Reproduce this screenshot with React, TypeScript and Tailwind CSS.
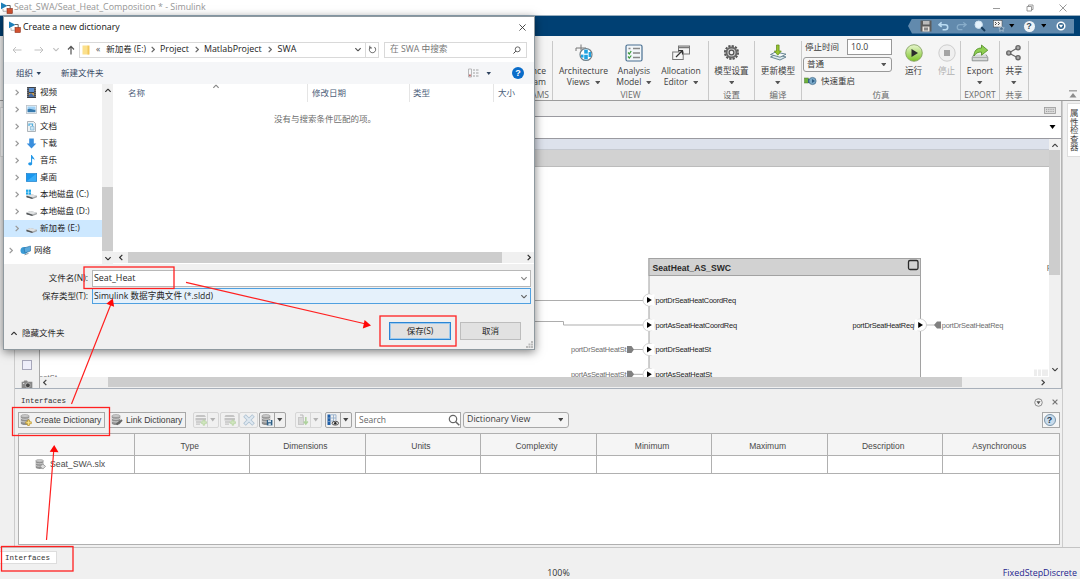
import type { ReactNode } from "react";

import clsx from "clsx";

type IconProps = {
  className?: string;
};

const UI_FONT = "font-['Open_Sans','Noto_Sans_CJK_SC',sans-serif]";

const COLUMNS = [
  "",
  "Type",
  "Dimensions",
  "Units",
  "Complexity",
  "Minimum",
  "Maximum",
  "Description",
  "Asynchronous",
];

const TREE = [
  { name: "视频", icon: <VideoIcon /> },
  { name: "图片", icon: <PictureIcon /> },
  { name: "文档", icon: <DocumentIcon /> },
  { name: "下载", icon: <DownloadIcon /> },
  { name: "音乐", icon: <MusicIcon /> },
  { name: "桌面", icon: <DesktopIcon /> },
  { name: "本地磁盘 (C:)", icon: <DiskIcon system /> },
  { name: "本地磁盘 (D:)", icon: <DiskIcon /> },
  { name: "新加卷 (E:)", icon: <DiskIcon />, selected: true },
];

/* ---------- icons ---------- */

function Caret({ className }: IconProps) {
  return (
    <svg viewBox="0 0 6 4" className={clsx("h-[3.5px] w-[5.5px] shrink-0", className)}>
      <path d="M0 0h6L3 4z" fill="currentColor" />
    </svg>
  );
}

function Chevron({ className }: IconProps) {
  return (
    <svg viewBox="0 0 6 10" className={clsx("h-[7px] w-[4px] shrink-0", className)}>
      <path d="M1 1l4 4-4 4" fill="none" stroke="currentColor" strokeWidth="1.8" />
    </svg>
  );
}

function SimulinkIcon({ className }: IconProps) {
  return (
    <svg viewBox="0 0 12 12" className={clsx("h-3 w-3 shrink-0", className)}>
      <path d="M0 .5l6.500 3.300L0 7.200z" fill="#1e7fb8" />
      <path d="M6 3.500h3.200V7" fill="none" stroke="#555" strokeWidth=".9" />
      <rect x="6" y="6.500" width="5.300" height="5" fill="#d2512f" stroke="#8e2d18" strokeWidth=".6" />
      <path d="M2 7v2.300h4" fill="none" stroke="#999" strokeWidth=".7" />
    </svg>
  );
}

function VideoIcon() {
  return (
    <svg viewBox="0 0 11 11" className="h-[11px] w-[11px]">
      <rect x="1" y="0" width="9" height="11" fill="#3b3f46" />
      <rect x="3" y="1" width="5" height="4" fill="#5d8fce" />
      <rect x="3" y="6" width="5" height="4" fill="#c29a4f" />
      <path d="M1.900 .8v10M9.100 .8v10" stroke="#d7d7d7" strokeWidth=".8" strokeDasharray="1 1" />
      <path d="M3 8l2-2 3 3v1H3z" fill="#436ba9" />
    </svg>
  );
}

function PictureIcon() {
  return (
    <svg viewBox="0 0 11 11" className="h-[11px] w-[11px]">
      <rect x=".5" y="1.500" width="10" height="8" fill="#f4f8fb" stroke="#b7bfc6" strokeWidth=".8" />
      <rect x="1.500" y="2.500" width="8" height="3" fill="#9ed0f5" />
      <path d="M1.500 5.200c3-1.600 5 .8 8 .4v2.600h-8z" fill="#3579ad" />
    </svg>
  );
}

function DocumentIcon() {
  return (
    <svg viewBox="0 0 11 11" className="h-[11px] w-[11px]">
      <path d="M1.500.5h6l2 2v8h-8z" fill="#eef2f4" stroke="#9aa2a8" strokeWidth=".8" />
      <path d="M3 5V3h3.500v2" fill="none" stroke="#4eaee0" strokeWidth="1.200" />
      <path d="M4.500 5.500h3.500v3.500H4.500z" fill="#c9e4f3" stroke="#7fb6d6" strokeWidth=".7" />
    </svg>
  );
}

function DownloadIcon() {
  return (
    <svg viewBox="0 0 11 11" className="h-[11px] w-[11px]">
      <path d="M3.200 .6h4.600v4.800H10.300L5.500 10.400.7 5.400h2.500z" fill="#3a8fdd" />
    </svg>
  );
}

function MusicIcon() {
  return (
    <svg viewBox="0 0 11 11" className="h-[11px] w-[11px]">
      <path d="M5 0h1c.2 2 3 2.600 2.400 5.600C8 4 7 3.600 6 3.500V8.500z" fill="#1e96e8" />
      <path d="M5.600 1v7.500" stroke="#1e96e8" strokeWidth="1" />
      <ellipse cx="4.200" cy="8.800" rx="2" ry="1.600" fill="#1e96e8" />
    </svg>
  );
}

function DesktopIcon() {
  return (
    <svg viewBox="0 0 11 11" className="h-[11px] w-[11px]">
      <rect x=".3" y="1.500" width="10.400" height="8" fill="#1a97ee" stroke="#1279c6" strokeWidth=".6" />
      <path d="M1 9l9-7v7z" fill="#38adf8" />
    </svg>
  );
}

function DiskIcon({ system = false }: { system?: boolean }) {
  return (
    <svg viewBox="0 0 11 11" className="h-[11px] w-[11px]">
      <path d="M.5 6.500L4.500 5 11 6.800v1.400L6.500 10 .5 8.200z" fill="#a3a6a8" />
      <path d="M.5 6.500L4.500 5 11 6.800 6.500 8.600z" fill="#dfe1e2" />
      <path d="M.5 6.800l6 2V10l-6-1.800z" fill="#4f5254" />
      {system && (
        <g fill="#1fa7e8">
          <rect x="0" y="0.600" width="2.300" height="2.300" />
          <rect x="2.700" y="0.600" width="2.300" height="2.300" />
          <rect x="0" y="3.300" width="2.300" height="2.300" />
          <rect x="2.700" y="3.300" width="2.300" height="2.300" />
        </g>
      )}
    </svg>
  );
}

function NetworkIcon() {
  return (
    <svg viewBox="0 0 11 11" className="h-[11px] w-[11px]">
      <circle cx="4" cy="5.500" r="3.500" fill="#3a9bd6" />
      <path d="M4 3l6.500-2v5L5 8z" fill="#5aa9dc" stroke="#2b6d9c" strokeWidth=".6" />
      <path d="M4.500 9.800l4-1.400" stroke="#7b8a94" strokeWidth=".9" />
    </svg>
  );
}

function ViewsIcon() {
  return (
    <svg viewBox="0 0 18 18" className="h-[18px] w-[18px]">
      <path d="M6 .5v6M1 4h10M1 4v3M11 4v2" stroke="#777" strokeWidth="1" fill="none" />
      <circle cx="11" cy="10.500" r="6" fill="#fff" stroke="#6f7f88" strokeWidth="1.200" />
      <g fill="#1fa2e0">
        <rect x="9.200" y="5.600" width="3.600" height="4" />
        <rect x="6" y="10.600" width="2.500" height="3" />
        <rect x="9.200" y="10.800" width="3.600" height="4.600" />
        <rect x="13.600" y="8" width="2.400" height="5" />
      </g>
    </svg>
  );
}

function AnalysisIcon() {
  return (
    <svg viewBox="0 0 18 18" className="h-[18px] w-[18px]">
      <rect x="1" y="1" width="16" height="16" rx="1.500" fill="#f2f6f9" stroke="#486f91" strokeWidth="1.200" />
      <path d="M3 8.500l1.300 1.500L6.200 7M3 12.500l1.300 1.500 2-2.500" stroke="#3b9a3b" strokeWidth="1.200" fill="none" />
      <path d="M8 4.500h7M8 9h7M8 13.500h7M3.500 4.500h2" stroke="#888" strokeWidth="1.400" />
    </svg>
  );
}

function AllocationIcon() {
  return (
    <svg viewBox="0 0 18 18" className="h-[18px] w-[18px]">
      <rect x="6.500" y="2" width="11" height="8" fill="#f3f3f3" stroke="#777" />
      <path d="M6.500 3.500h11" stroke="#777" strokeWidth="1.500" />
      <rect x=".7" y="8" width="10.500" height="7.500" fill="#f5f5f5" stroke="#777" />
      <path d="M4 13l6-6M6.500 6.500h4v4" stroke="#333" strokeWidth="1.200" fill="none" />
    </svg>
  );
}

function GearIcon() {
  return (
    <svg viewBox="0 0 18 18" className="h-[17px] w-[17px]">
      <circle cx="9" cy="9" r="7" fill="none" stroke="#555" strokeWidth="2" strokeDasharray="2.400 1.260" />
      <circle cx="9" cy="9" r="5.300" fill="#ccc" stroke="#666" strokeWidth="2" />
      <circle cx="9" cy="9" r="2.500" fill="#f3f3f3" stroke="#555" strokeWidth="1.300" />
    </svg>
  );
}

function UpdateIcon() {
  return (
    <svg viewBox="0 0 18 18" className="h-[18px] w-[18px]">
      <path d="M1.500 13l5-2.500 10.500 2.500-6 3z" fill="#dce8ec" stroke="#5c7d8b" strokeWidth=".9" />
      <path d="M1.500 10.500l5-2.500 10.500 2.200-6 3z" fill="#f3f7f8" stroke="#5c7d8b" strokeWidth=".9" />
      <path d="M7.500 1h2.600v6h2.200l-3.500 4.200L5.300 7h2.200z" fill="#97c32f" stroke="#5d8716" strokeWidth=".7" />
    </svg>
  );
}

function RunIcon() {
  return (
    <svg viewBox="0 0 18 18" className="h-[18px] w-[18px]">
      <defs>
        <linearGradient id="run" x1="0" y1="0" x2="0" y2="1">
          <stop offset="0" stopColor="#e9f7cf" />
          <stop offset="1" stopColor="#7cc427" />
        </linearGradient>
      </defs>
      <circle cx="9" cy="9" r="8.300" fill="url(#run)" stroke="#7d9a5a" strokeWidth=".8" />
      <path d="M6.500 5l6.500 4-6.500 4z" fill="#2b2b2b" />
    </svg>
  );
}

function StopIcon() {
  return (
    <svg viewBox="0 0 18 18" className="h-[18px] w-[18px]">
      <circle cx="9" cy="9" r="8.200" fill="#efefef" stroke="#c4c4c4" strokeWidth=".8" />
      <rect x="6" y="6" width="6" height="6" fill="#a3a3a3" />
    </svg>
  );
}

function ExportIcon() {
  return (
    <svg viewBox="0 0 18 18" className="h-[18px] w-[18px]">
      <path d="M3 10.500L1.200 13.500v3.300h15.600v-3.300L15 10.500" fill="#d5d8d8" stroke="#7b8080" strokeWidth=".8" />
      <path d="M1.500 13.500h15" stroke="#999" strokeWidth=".7" />
      <path d="M3 12C3 6.500 6 4 10.500 4V1l6.300 5.200-6.300 5V8C7 8 4.800 9 3 12z" fill="#8fcf52" stroke="#4d8a23" strokeWidth=".8" />
    </svg>
  );
}

function ShareIcon() {
  return (
    <svg viewBox="0 0 18 18" className="h-[17px] w-[17px]">
      <path d="M4 9.500L13.500 4M4 9.500l9.500 5" stroke="#666" strokeWidth="1.300" />
      <g fill="#aaa" stroke="#666" strokeWidth="1.400">
        <circle cx="4" cy="9.500" r="2.200" />
        <circle cx="13.800" cy="4" r="2.200" />
        <circle cx="13.800" cy="14.500" r="2.200" />
      </g>
    </svg>
  );
}

type DatabaseProps = {
  badge?: "add" | "link" | "save" | "edit";
  className?: string;
};

function DatabaseIcon({ badge, className }: DatabaseProps) {
  return (
    <svg viewBox="0 0 12 12" className={clsx("h-3 w-3 shrink-0", className)}>
      <path d="M.8 2v7.400c0 .9 2 1.500 4.200 1.500s4.200-.6 4.200-1.500V2z" fill="#8f8f8f" />
      <path d="M.8 4.300c1.500 1.300 6.900 1.300 8.400 0M.8 7c1.500 1.300 6.900 1.300 8.400 0" stroke="#e3e3e3" strokeWidth=".8" fill="none" />
      <ellipse cx="5" cy="2" rx="4.200" ry="1.500" fill="#c9c9c9" stroke="#888" strokeWidth=".5" />
      {badge === "add" && (
        <path d="M7.600 6h1.800v1.800h1.900v1.900H9.400v1.800H7.600V9.700H5.800V7.800h1.800z" fill="#fbe68c" stroke="#b58a1c" strokeWidth=".7" />
      )}
      {badge === "link" && <path d="M5.500 10.500l4-3.500M8 9l3-3" stroke="#666" strokeWidth="1.800" fill="none" />}
      {badge === "save" && (
        <>
          <rect x="5.800" y="6" width="5.600" height="5.400" fill="#2f5f86" />
          <rect x="7" y="6.200" width="3" height="2" fill="#d5e4ef" />
          <rect x="7.400" y="9.300" width="2.400" height="2" fill="#d5e4ef" />
        </>
      )}
      {badge === "edit" && (
        <path d="M5.500 8l3-2.500 3 2.500-3 3z" fill="#ddd" stroke="#888" strokeWidth=".8" />
      )}
    </svg>
  );
}

function RowAddIcon() {
  return (
    <svg viewBox="0 0 12 12" className="h-3 w-3 opacity-50">
      <path d="M1.500 1h8l1.500 2H.5zM.5 4h10.500v2.400H.5z" fill="#999" />
      <path d="M1 8h5M1 10.200h4" stroke="#999" strokeWidth="1.300" />
      <path d="M8 6h1.700v1.700h1.800v1.700H9.700v1.800H8V9.400H6.200V7.700H8z" fill="#b5e08f" stroke="#6fae45" strokeWidth=".6" />
    </svg>
  );
}

function DeleteIcon() {
  return (
    <svg viewBox="0 0 12 12" className="h-3 w-3 opacity-50">
      <path d="M1.500 1.500l9 9M10.500 1.500l-9 9" stroke="#6b93b5" strokeWidth="3.600" />
      <path d="M2 2l8 8M10 2l-8 8" stroke="#cfe2f2" strokeWidth="2" />
    </svg>
  );
}

function ImportIcon() {
  return (
    <svg viewBox="0 0 12 12" className="h-3 w-3 opacity-45">
      <rect x="1" y="3" width="6" height="8" fill="#999" />
      <path d="M2 5h4M2 7h4M2 9h4" stroke="#eee" strokeWidth=".8" />
      <path d="M3 1h3v2" fill="none" stroke="#777" />
      <path d="M8.800 3v6M6.800 7.500l2 2.500 2-2.500" stroke="#5fae39" strokeWidth="1.500" fill="none" />
    </svg>
  );
}

function ColumnsIcon() {
  return (
    <svg viewBox="0 0 12 12" className="h-3 w-3">
      <rect x=".5" y=".5" width="3" height="10.500" fill="#1f5fa8" />
      <path d="M4 .8h5v6M4 4h5M4 7h3M6.500 1v6M.5 4h3M.5 7.500h3" stroke="#8aa7c7" strokeWidth=".8" fill="none" />
      <ellipse cx="8.300" cy="9.200" rx="3.300" ry="1.900" fill="#e7e7e7" stroke="#333" strokeWidth=".8" />
      <circle cx="8.300" cy="9.200" r="1.200" fill="#222" />
    </svg>
  );
}

function MagnifierIcon({ className }: IconProps) {
  return (
    <svg viewBox="0 0 12 12" className={clsx("shrink-0", className)}>
      <circle cx="5" cy="5" r="3.700" fill="none" stroke="currentColor" strokeWidth="1.200" />
      <path d="M7.700 7.700l3.600 3.600" stroke="currentColor" strokeWidth="1.500" />
    </svg>
  );
}

function HelpBall({ className }: IconProps) {
  return (
    <span
      className={clsx(
        "flex items-center justify-center rounded-full font-['Liberation_Sans',sans-serif] font-bold leading-none",
        className,
      )}
    >
      ?
    </span>
  );
}

/* ---------- main window ---------- */

function TitleBar() {
  return (
    <header className="flex h-[15px] w-full shrink-0 items-center bg-white pl-px text-[8.9px] leading-none text-[#979797]">
      <SimulinkIcon />
      <span className="ml-px whitespace-nowrap">Seat_SWA/Seat_Heat_Composition * - Simulink</span>
      <div className="ml-auto flex items-center text-[#8e8e8e]">
        <svg viewBox="0 0 8 8" className="mr-[25px] h-2 w-2">
          <path d="M0 4.500h7" stroke="currentColor" strokeWidth=".9" />
        </svg>
        <svg viewBox="0 0 8 8" className="mr-[25px] h-2 w-2">
          <path d="M1 2.500h4.500V7H1zM2.500 2.500V1H7v4.500H5.500" fill="none" stroke="currentColor" strokeWidth=".9" />
        </svg>
        <svg viewBox="0 0 8 8" className="mr-[13px] h-2 w-2">
          <path d="M.5.5l7 7M7.500.5l-7 7" stroke="currentColor" strokeWidth=".9" />
        </svg>
      </div>
    </header>
  );
}

function QuickAccess() {
  return (
    <div className="flex h-[21px] w-full shrink-0 items-center justify-end border-t border-[#9ab0c0] bg-[#004073] pr-[6px]">
      <div className="flex h-[15px] w-[166px] items-center bg-[#628aad] pl-[12px] [clip-path:polygon(4px_0,100%_0,100%_100%,4px_100%,0_50%)]">
        <svg viewBox="0 0 12 12" className="h-3 w-3">
          <path d="M.5.5h11v11H.5z" fill="#5c5c5c" />
          <rect x="3" y="1" width="6.500" height="3.500" fill="#bbb" />
          <rect x="2.500" y="6.500" width="7" height="5" fill="#e8e2dc" />
          <rect x="4" y="7.500" width="4" height="3" fill="#888" />
        </svg>
        <svg viewBox="0 0 12 12" className="ml-[6px] h-[11px] w-[11px]">
          <path d="M4 1.500L1 4l3 2.500M1.500 4H8c3.500 0 3.500 5.500 0 5.500H5" fill="none" stroke="#b9dbf2" strokeWidth="1.700" />
        </svg>
        <svg viewBox="0 0 12 12" className="ml-[7px] h-[11px] w-[11px]">
          <path d="M8 1.500L11 4 8 6.500M10.500 4H4C.5 4 .5 9.500 4 9.500h3" fill="none" stroke="#88adca" strokeWidth="1.400" />
        </svg>
        <svg viewBox="0 0 12 12" className="ml-[7px] h-3 w-3">
          <circle cx="4.700" cy="4.700" r="3.700" fill="#e4f2fc" stroke="#cfe2f0" />
          <path d="M7.300 7.300l3.700 3.700" stroke="#173c5c" strokeWidth="2" />
        </svg>
        <svg viewBox="0 0 12 12" className="ml-[7px] h-3 w-3">
          <rect x=".5" y=".5" width="8.500" height="6.500" fill="#f1f1f1" stroke="#444" strokeWidth=".5" />
          <path d="M2 2l1.500 1.500L2 5M5 2l1.500 1.500L5 5" stroke="#333" strokeWidth=".9" fill="none" />
          <path d="M8.500 6l.9 1.700 1.900.3-1.400 1.300.4 2-1.800-1-1.800 1 .4-2L5.700 8l1.900-.3z" fill="#4f7392" stroke="#d4e3ef" strokeWidth=".6" />
        </svg>
        <Caret className="ml-[4px] text-black" />
        <HelpBall className="ml-[9px] h-[11px] w-[11px] bg-[#eef3f7] text-[9px] text-[#33475a]" />
        <Caret className="ml-[6px] text-black" />
        <svg viewBox="0 0 10 10" className="ml-[10px] h-[10px] w-[10px]">
          <circle cx="5" cy="5" r="3.800" fill="#31648e" stroke="#fff" strokeWidth="1.500" />
          <path d="M2.800 3.800h4.400L5 6.800z" fill="#fff" />
        </svg>
      </div>
    </div>
  );
}

type RibbonGroupProps = {
  label: string;
  className: string;
  children: ReactNode;
};

function RibbonGroup({ label, className, children }: RibbonGroupProps) {
  return (
    <section className={clsx("flex h-[59px] shrink-0 flex-col border-r border-[#c9c9c9]", className)}>
      <div className="flex h-[49px] justify-center">{children}</div>
      <div className="pt-px text-center text-[8.500px] leading-[10px] text-[#6a6a6a]">{label}</div>
    </section>
  );
}

type RibbonButtonProps = {
  icon: ReactNode;
  label: string;
  second?: string;
  menu?: boolean;
  disabled?: boolean;
  className?: string;
};

function RibbonButton({ icon, label, second, menu, disabled, className }: RibbonButtonProps) {
  return (
    <div
      className={clsx(
        "flex shrink-0 flex-col items-center whitespace-nowrap text-[8.600px] leading-[11px]",
        disabled ? "text-[#b1b1b1]" : "text-[#3e3e3e]",
        className,
      )}
    >
      <span className="flex h-[23px] items-center">{icon}</span>
      <span className="mt-[1.500px]">{label}</span>
      <span className="flex h-[11px] items-center gap-[5px]">
        {second}
        {menu && <Caret className="mt-px text-[#555]" />}
      </span>
    </div>
  );
}

function Ribbon() {
  return (
    <div className="flex h-[65px] w-full shrink-0 items-start border-b border-[#9c9c9c] bg-[#f5f5f5] pt-[5px]">
      <section className="flex h-[59px] w-[553px] shrink-0 flex-col items-end border-r border-[#c9c9c9] text-[8.600px] leading-[11px] text-[#3e3e3e]">
        <div className="mt-[24.500px] h-[25px] pr-[6px] text-right">
          nce
          <br />
          am
        </div>
        <div className="pr-[3px] text-[8.500px] leading-[10px] text-[#6a6a6a]">AMS</div>
      </section>
      <RibbonGroup label="VIEW" className="w-[156px]">
        <RibbonButton icon={<ViewsIcon />} label="Architecture" second="Views" menu className="w-[56px]" />
        <RibbonButton icon={<AnalysisIcon />} label="Analysis" second="Model" menu className="w-[45px]" />
        <RibbonButton icon={<AllocationIcon />} label="Allocation" second="Editor" menu className="w-[49px]" />
      </RibbonGroup>
      <RibbonGroup label="设置" className="w-[46px]">
        <RibbonButton icon={<GearIcon />} label="模型设置" menu />
      </RibbonGroup>
      <RibbonGroup label="编译" className="w-[47px]">
        <RibbonButton icon={<UpdateIcon />} label="更新模型" menu />
      </RibbonGroup>
      <RibbonGroup label="仿真" className="w-[159px]">
        <div className="flex w-[89px] shrink-0 flex-col pl-[1px] text-[8.500px] leading-none text-[#3a3a3a]">
          <div className="-mt-[2px] flex h-[16px] items-center justify-between">
            <span className="pl-[2px]">停止时间</span>
            <span className="-mr-px flex h-[16px] w-[45px] items-center border border-[#999] bg-white pl-[3px] text-[8.700px]">
              10.0
            </span>
          </div>
          <div className="-mr-px mt-[2px] flex h-[15px] items-center justify-between rounded-[3px] border border-[#999] bg-[#f7f7f7] pl-[3px] pr-[5px]">
            普通
            <Caret className="text-[#555]" />
          </div>
          <div className="mt-[3px] flex h-[12px] items-center gap-1">
            <svg viewBox="0 0 13 10" className="ml-px h-[10px] w-[13px]">
              <rect x=".5" y="2" width="4" height="5" fill="#6fb23d" stroke="#4b7a2c" strokeWidth=".5" />
              <rect x="4" y="3" width="2" height="4" fill="#2d5d84" />
              <circle cx="8.500" cy="5" r="3.600" fill="#7ba9c9" stroke="#3f6787" strokeWidth=".7" />
              <path d="M8 3l3 2-3 2z" fill="#2d5d84" />
            </svg>
            快速重启
          </div>
        </div>
        <RibbonButton icon={<RunIcon />} label="运行" className="ml-[9px] w-[27px]" />
        <RibbonButton icon={<StopIcon />} label="停止" disabled className="ml-[6px] w-[27px]" />
      </RibbonGroup>
      <RibbonGroup label="EXPORT" className="w-[39px]">
        <RibbonButton icon={<ExportIcon />} label="Export" menu />
      </RibbonGroup>
      <RibbonGroup label="共享" className="w-[29px]">
        <RibbonButton icon={<ShareIcon />} label="共享" menu />
      </RibbonGroup>
      <svg viewBox="0 0 8 8" className="mb-[2px] ml-auto mr-[3px] h-2 w-2 self-end">
        <path d="M0 .8h8" stroke="#999" strokeWidth="1.300" />
        <path d="M4 3l3.500 4.500h-7z" fill="#8c8c8c" />
      </svg>
    </div>
  );
}

type PortProps = {
  x: number;
  y: number;
};

function Port({ x, y }: PortProps) {
  return (
    <g>
      <circle cx={x} cy={y} r="6" fill="#fff" stroke="#c8c8c8" strokeWidth=".8" />
      <rect x={x - 1} y={y - 5.600} width="6.500" height="11.200" fill="#fff" />
      <path d={`M${x - 2} ${y - 3}l4.800 3-4.800 3z`} fill="#000" />
    </g>
  );
}

// Coordinates inside the drawing are window coordinates, canvas origin is (40, 167)
function Diagram() {
  const inputs = [
    { y: 300, name: "portDrSeatHeatCoordReq", length: 80.500 },
    { y: 325, name: "portAsSeatHeatCoordReq", length: 81.500 },
    { y: 349.500, name: "portDrSeatHeatSt", length: 55.500, source: true },
    { y: 374.300, name: "portAsSeatHeatSt", length: 56.500, source: true },
  ];

  return (
    <svg
      viewBox="40 167 1009 210"
      className="h-[210px] w-[1009px] shrink-0 bg-white font-['Liberation_Sans',sans-serif] text-[7.400px]"
    >
      <rect x="649" y="258.500" width="271.500" height="140" fill="#f5f5f5" stroke="#a2a2a2" />
      <rect x="649" y="258.500" width="271.500" height="17" fill="#d2d2d2" stroke="#a2a2a2" />
      <text x="652.500" y="271" fontSize="8.600" fontWeight="700" fill="#2a2a2a" textLength="78.500">
        SeatHeat_AS_SWC
      </text>
      <rect x="908.500" y="260.500" width="9.500" height="9" rx="1.500" fill="none" stroke="#2a2a2a" strokeWidth="1.300" />

      <path d="M400 300.500h244M400 321.500h163.500v3.500H644M628 349.500h16M628 374.300h16" fill="none" stroke="#adadad" />
      {inputs.map((input) => (
        <g key={input.name}>
          <Port x={649} y={input.y} />
          <text x="655.500" y={input.y + 2.600} fill="#222" textLength={input.length}>
            {input.name}
          </text>
          {input.source && (
            <>
              <text x="571" y={input.y + 2.600} fill="#6e6e6e" textLength="55.500">
                {input.name}
              </text>
              <path d={`M627 ${input.y - 3.500}h4.500l2.500 3.500-2.500 3.500h-4.500z`} fill="#808080" />
            </>
          )}
        </g>
      ))}

      <path d="M926 325h10" stroke="#bdbdbd" />
      <circle cx="920.500" cy="325" r="6" fill="#fff" stroke="#c8c8c8" strokeWidth=".8" />
      <rect x="915" y="319.400" width="6" height="11.200" fill="#fff" />
      <path d="M918.200 322l4.800 3-4.800 3z" fill="#000" />
      <text x="852.500" y="327.600" fill="#222" textLength="61.500">
        portDrSeatHeatReq
      </text>
      <path d="M934 325l3-3.500h4v7h-4z" fill="#808080" />
      <text x="941.800" y="327.600" fill="#6e6e6e" textLength="61.500">
        portDrSeatHeatReq
      </text>
      <text x="1047" y="268.500" fill="#444">
        p
      </text>
      <text x="39" y="380.200" fill="#6e6e6e" textLength="18">
        eatSt
      </text>
      <path d="M1034 369.500h14v6.500h-14z" fill="#ededed" />
      <path d="M1037.500 369v7M1041.500 369v7" stroke="#fff" />
    </svg>
  );
}

function Palette() {
  return (
    <div className="flex w-[24px] shrink-0 flex-col items-center justify-end overflow-hidden">
      <svg viewBox="0 0 12 4" className="h-1 w-3">
        <rect x="1" width="10" height="4" fill="#777" />
      </svg>
      <div className="mt-[10px] h-[10px] w-[10px] border border-[#a7a7ba] bg-[#eeeefa]" />
      <svg viewBox="0 0 12 9" className="mt-[10px] h-[8px] w-3">
        <path d="M0 2h2l1-1.500h3L7 2h5v7H0z" fill="#888" />
        <circle cx="7" cy="6" r="2.700" fill="#444" stroke="#ccc" strokeWidth=".8" />
        <path d="M1.500 4h1.500" stroke="#eee" />
      </svg>
    </div>
  );
}

function Editor() {
  return (
    <div className="flex h-[288px] w-[1047px] shrink-0 flex-col border-b border-r border-b-[#a8b0ba] border-r-[#b5b5b5]">
      <div className="flex h-[15px] items-center justify-end pr-[5px]">
        <svg viewBox="0 0 12 7" className="mt-[3px] h-[7px] w-3">
          <rect x=".5" y=".5" width="11" height="6" fill="#dcdcdc" stroke="#999" strokeWidth=".8" />
          <path d="M2 2.300h8M2 4.400h8" stroke="#999" strokeDasharray="1 .8" />
        </svg>
      </div>
      <div className="flex h-[23px] items-center justify-end border-y border-[#9a9aa0] bg-white pr-[5px]">
        <Caret className="mt-[-2px] h-[4px] w-[7px] text-black" />
      </div>
      <div className="flex flex-1">
        <Palette />
        <div className="flex flex-1 flex-col border-l border-[#aaa]">
          <div className="flex">
            <div className="flex w-[1009px] shrink-0 flex-col">
              <div className="h-[11px] border-b border-[#c5c9d0] bg-[#dde2ec]" />
              <div className="h-[17px] border-b border-[#bcbcbc] bg-[#d2d2d2]" />
              <Diagram />
            </div>
            <div className="flex h-[238px] w-[11px] flex-col items-center justify-between bg-[#f0f0f0] pb-1 pt-[3px]">
              <Chevron className="-rotate-90 text-[#444]" />
              <div className="mt-px h-[125px] w-full bg-[#cdcdcd]" />
              <div className="flex-1" />
              <Chevron className="rotate-90 text-[#444]" />
            </div>
          </div>
          <div className="flex h-[10px] w-[1009px] items-center justify-between pl-[3px] pr-1">
            <Chevron className="rotate-180 text-[#444]" />
            <div className="ml-[61px] mr-auto h-[10px] w-[854px] bg-[#cdcdcd]" />
            <Chevron className="text-[#444]" />
          </div>
        </div>
      </div>
    </div>
  );
}

type ToolProps = {
  children: ReactNode;
  menu?: boolean;
  disabled?: boolean;
  className?: string;
};

function Tool({ children, menu, disabled, className }: ToolProps) {
  return (
    <div
      className={clsx(
        "flex h-[16px] shrink-0 items-center rounded-[2px] border",
        disabled ? "border-[#d6d6d6]" : "border-[#a3a3a3]",
        className,
      )}
    >
      <span className="flex flex-1 items-center justify-center">{children}</span>
      {menu && (
        <span
          className={clsx(
            "flex h-full w-[11px] items-center justify-center border-l",
            disabled ? "border-[#d6d6d6] text-[#b3b3b3]" : "border-[#a3a3a3] text-[#444]",
          )}
        >
          <Caret />
        </span>
      )}
    </div>
  );
}

function InterfaceEditor() {
  return (
    <div className="flex flex-1 flex-col pl-[3px] pr-[2px] font-['Liberation_Sans',sans-serif]">
      <div className="flex h-[22px] items-center justify-between pl-[3px] pt-[4px]">
        <span className="font-['Liberation_Mono',monospace] text-[7.500px] text-[#333]">Interfaces</span>
        <span className="flex items-center gap-[9px] pr-[2px]">
          <svg viewBox="0 0 10 10" className="h-[9px] w-[9px]">
            <circle cx="5" cy="5" r="4.200" fill="none" stroke="#777" strokeWidth=".9" />
            <path d="M2.700 3.500h4.600L5 7z" fill="#555" />
          </svg>
          <svg viewBox="0 0 7 7" className="h-[6px] w-[6px]">
            <path d="M.7.7l5.600 5.600M6.300.7L.7 6.300" stroke="#777" strokeWidth="1.400" />
          </svg>
        </span>
      </div>
      <div className="flex h-[18px] items-center whitespace-nowrap text-[8.600px] text-[#3c3c3c]">
        <div className="flex h-[16px] w-[87px] shrink-0 items-center border border-[#a8a8a8] bg-[#f2f2f2] pl-px">
          <DatabaseIcon badge="add" />
          <span className="ml-[3px]">Create Dictionary</span>
        </div>
        <div className="ml-[4px] flex h-[16px] w-[77px] shrink-0 items-center border border-[#a8a8a8] bg-[#f2f2f2] pl-px">
          <DatabaseIcon badge="link" />
          <span className="ml-[3px]">Link Dictionary</span>
        </div>
        <Tool menu disabled className="ml-[7px] w-[26px]">
          <RowAddIcon />
        </Tool>
        <Tool disabled className="ml-px w-[19px]">
          <RowAddIcon />
        </Tool>
        <Tool disabled className="w-[19px]">
          <DeleteIcon />
        </Tool>
        <Tool menu className="ml-px w-[27px]">
          <DatabaseIcon badge="save" />
        </Tool>
        <Tool menu disabled className="ml-[9px] w-[27px]">
          <ImportIcon />
        </Tool>
        <Tool menu className="ml-[3px] w-[27px]">
          <ColumnsIcon />
        </Tool>
        <div className="ml-[3px] flex h-[16px] w-[106px] shrink-0 items-center justify-between border border-[#a8a8a8] bg-white pl-[3px] font-['Open_Sans',sans-serif] text-[8.500px] text-[#666]">
          Search
          <MagnifierIcon className="h-[12px] w-[12px] text-[#666]" />
        </div>
        <div className="ml-[2px] flex h-[16px] w-[106px] shrink-0 items-center justify-between rounded-[3px] border border-[#a8a8a8] bg-[#f4f4f4] pl-[3px] pr-[5px] font-['Open_Sans',sans-serif] text-[8.800px]">
          Dictionary View
          <Caret className="text-[#444]" />
        </div>
        <div className="ml-auto flex h-[16px] w-[18px] items-center justify-center border border-[#a8a8a8] bg-[#f6f6f6] pr-[3px]">
          <HelpBall className="h-[12px] w-[12px] border border-[#7d96aa] bg-[#c9dced] text-[9px] text-[#233a50]" />
        </div>
      </div>
      <div className="mt-[4px] flex h-[112px] flex-col border border-[#b0b0b0] bg-white text-[8.500px] text-[#4a4a4a]">
        <div className="grid h-[22px] shrink-0 grid-cols-9 border-b border-[#b0b0b0] bg-[#f5f5f5]">
          {COLUMNS.map((column, index) => (
            <div
              key={index}
              className="flex items-center justify-center border-r border-[#b0b0b0] pr-[4px] pt-[3px] last:border-r-0"
            >
              {column}
            </div>
          ))}
        </div>
        <div className="grid h-[18px] shrink-0 grid-cols-9 border-b border-[#b0b0b0]">
          {COLUMNS.map((_, index) => (
            <div key={index} className="flex items-center border-r border-[#b0b0b0] last:border-r-0">
              {index === 0 && (
                <>
                  <DatabaseIcon badge="edit" className="ml-[16px] h-[11px] w-[11px]" />
                  <span className="ml-[4px] text-[8.700px]">Seat_SWA.slx</span>
                </>
              )}
            </div>
          ))}
        </div>
      </div>
    </div>
  );
}

function StatusBar() {
  return (
    <footer className="flex h-[32px] w-full shrink-0 flex-col border-t border-[#c4c4c4]">
      <div className="mt-[3px] flex h-[13px] w-[57px] items-center border border-l-0 border-[#ddd] bg-white pl-[5px] pt-[2px] font-['Liberation_Mono',monospace] text-[7.500px] text-[#333]">
        Interfaces
      </div>
      <div className="grid grid-cols-3 items-center pt-[3px] text-[8.900px] leading-[12px]">
        <span />
        <span className="pl-[37px] text-center text-[#333]">100%</span>
        <span className="pr-[3px] text-right text-[#23238e]">FixedStepDiscrete</span>
      </div>
    </footer>
  );
}

/* ---------- file dialog ---------- */

function AddressBar() {
  return (
    <div className="flex h-[25px] items-center pl-[8px] pr-[7px] text-[8.700px] leading-none text-[#222]">
      <div className="flex items-center text-[#c0c0c0]">
        <svg viewBox="0 0 10 8" className="h-[8px] w-[10px]">
          <path d="M9.500 4H1M4 1L1 4l3 3" fill="none" stroke="currentColor" />
        </svg>
        <svg viewBox="0 0 10 8" className="ml-[12px] h-[8px] w-[10px]">
          <path d="M.5 4H9M6 1l3 3-3 3" fill="none" stroke="currentColor" />
        </svg>
        <Chevron className="ml-[10px] h-[6px] rotate-90" />
        <svg viewBox="0 0 8 10" className="ml-[9px] h-[10px] w-[8px] text-[#555]">
          <path d="M4 9.500V1.500M1 4.500l3-3.200 3 3.200" fill="none" stroke="currentColor" strokeWidth="1.200" />
        </svg>
      </div>
      <div className="ml-[4px] flex h-[16px] w-[300px] shrink-0 items-center whitespace-nowrap border border-[#d9d9d9]">
        <svg viewBox="0 0 8 10" className="ml-[2px] h-[10px] w-[8px]">
          <path d="M.5.5h5l1.500 1v8H.5z" fill="#fbe08c" />
          <path d="M5.500.5H7.500v9h-2z" fill="#f2c85c" />
        </svg>
        <span className="ml-[6px] text-[#555]">«</span>
        <span className="ml-[6px] text-[8.500px]">新加卷 (E:)</span>
        <Chevron className="ml-[5px] h-[6px] text-[#666]" />
        <span className="ml-[5px] text-[8.900px]">Project</span>
        <Chevron className="ml-[6px] h-[6px] text-[#666]" />
        <span className="ml-[5px] text-[8.900px]">MatlabProject</span>
        <Chevron className="ml-[6px] h-[6px] text-[#666]" />
        <span className="ml-[6px] text-[8.900px]">SWA</span>
        <Chevron className="ml-auto mr-[5px] rotate-90 text-[#555]" />
        <span className="flex h-full w-[13px] items-center justify-center border-l border-[#d9d9d9]">
          <svg viewBox="0 0 10 10" className="h-[9px] w-[9px]">
            <path d="M3 2.200a3.500 3.500 0 1 0 4 0M2 .8v2.500h2.500" fill="none" stroke="#555" />
          </svg>
        </span>
      </div>
      <div className="ml-auto flex h-[16px] w-[143px] shrink-0 items-center justify-between border border-[#d9d9d9] pl-[5px] pr-[5px] text-[#757575]">
        在 SWA 中搜索
        <MagnifierIcon className="h-[8px] w-[8px] -scale-x-100 text-[#444]" />
      </div>
    </div>
  );
}

function FolderTree() {
  return (
    <div className="flex h-[180px] w-[98px] shrink-0 flex-col bg-white text-[8.500px] text-[#1e1e1e]">
      {TREE.map((item) => (
        <div
          key={item.name}
          className={clsx(
            "flex h-[17px] shrink-0 items-center whitespace-nowrap pl-[11px]",
            item.selected && "bg-[#cde8ff]",
          )}
        >
          <Chevron className="text-[#9a9a9a]" />
          <span className="ml-[7px] flex">{item.icon}</span>
          <span className="ml-[3px]">{item.name}</span>
        </div>
      ))}
      <div className="mt-[5px] flex h-[17px] items-center pl-[5px]">
        <Chevron className="text-[#9a9a9a]" />
        <span className="ml-[7px] flex">
          <NetworkIcon />
        </span>
        <span className="ml-[3px]">网络</span>
      </div>
    </div>
  );
}

function FileList() {
  return (
    <div className="flex h-[180px] flex-1 flex-col bg-white text-[8.500px]">
      <div className="flex h-[18px] text-[#4c607a]">
        <div className="flex w-[195px] items-center border-r border-[#e5e5e5] pl-[15px]">
          名称
          <Chevron className="mb-[13px] ml-[69px] h-[6px] -rotate-90 text-[#8a8a8a]" />
        </div>
        <div className="flex w-[102px] items-center border-r border-[#e5e5e5] pl-[4px]">修改日期</div>
        <div className="flex w-[84px] items-center border-r border-[#e5e5e5] pl-[3px]">类型</div>
        <div className="flex flex-1 items-center pl-[4px]">大小</div>
      </div>
      <div className="flex-1 pl-[3px] pt-[10px] text-center leading-[14px] text-[#6d6d6d]">没有与搜索条件匹配的项。</div>
      <div className="mb-px flex h-[11px] items-center bg-[#f0f0f0] pl-[6px] pr-[3px]">
        <Chevron className="rotate-180 text-[#333]" />
        <div className="ml-[5px] h-[11px] w-[374px] bg-[#cdcdcd]" />
        <Chevron className="ml-auto text-[#333]" />
      </div>
    </div>
  );
}

function FileDialog() {
  return (
    <div className="absolute left-[3px] top-[16px] flex h-[334px] w-[532px] flex-col border border-[#8f999f] bg-white shadow-[0_2px_9px_rgba(0,0,0,0.5)]">
      <div className="flex h-[20px] shrink-0 items-center pl-[5px] pr-[8px] text-[8.800px] text-[#111]">
        <SimulinkIcon />
        <span className="ml-[2px] mt-px">Create a new dictionary</span>
        <svg viewBox="0 0 8 8" className="ml-auto h-[7px] w-[7px]">
          <path d="M.5.5l7 7M7.500.5l-7 7" stroke="#333" strokeWidth="1" />
        </svg>
      </div>
      <AddressBar />
      <div className="flex h-[22px] shrink-0 items-center bg-[#f5f6f8] pl-[12px] pr-[10px] text-[8.500px] text-[#2f435f]">
        <span>组织</span>
        <Caret className="ml-[3px] h-[3px] w-[4.500px]" />
        <span className="ml-[19.500px]">新建文件夹</span>
        <svg viewBox="0 0 11 10" className="ml-auto h-[10px] w-[11px]">
          <path d="M.5 1h3v8h-3z" fill="none" stroke="#aaa" strokeWidth=".8" />
          <path d="M5 2h2M8 2h2.500M5 5h2M8 5h2.500M5 8h2M8 8h2.500" stroke="#999" strokeWidth=".9" />
          <rect x="1" y="6.500" width="1.800" height="1.800" fill="#c26a6a" />
        </svg>
        <Caret className="ml-[7px] h-[3px] w-[4.500px]" />
        <HelpBall className="ml-[21px] h-[12px] w-[12px] bg-[#0a6cc9] text-[9px] text-white" />
      </div>
      <div className="flex h-[180px] shrink-0">
        <FolderTree />
        <div className="flex w-[11px] shrink-0 flex-col items-center bg-[#f0f0f0] pb-[2px] pt-[3px]">
          <Chevron className="-rotate-90 text-[#333]" />
          <div className="mt-auto h-[64px] w-full bg-[#cdcdcd]" />
          <Chevron className="mt-[4px] rotate-90 text-[#333]" />
        </div>
        <FileList />
      </div>
      <div className="flex flex-1 flex-col bg-[#f0f0f0] pr-[3px] text-[8.500px] leading-none text-[#1e1e1e]">
        <div className="mt-[6px] flex h-[17px] items-center">
          <span className="w-[85px] pr-px text-right">文件名(N):</span>
          <div className="ml-[3px] flex h-[17px] flex-1 items-center justify-between border border-[#b8b8b8] bg-white pl-px pr-[4px] text-[8.900px]">
            Seat_Heat
            <Chevron className="rotate-90 text-[#888]" />
          </div>
        </div>
        <div className="mt-px flex h-[16px] items-center">
          <span className="w-[85px] pr-px text-right">保存类型(T):</span>
          <div className="ml-[3px] flex h-[16px] flex-1 items-center justify-between border border-[#4fa0e0] bg-[#e5f1fb] pl-px pr-[4px] text-[8.600px]">
            Simulink 数据字典文件 (*.sldd)
            <Chevron className="rotate-90 text-[#666]" />
          </div>
        </div>
        <div className="mt-[18px] flex h-[18px] items-center">
          <Chevron className="ml-[8px] mt-[4px] -rotate-90 text-[#333]" />
          <span className="ml-[6px] mt-[4px]">隐藏文件夹</span>
          <div className="ml-auto flex h-[18px] w-[62px] items-center justify-center border-[1.500px] border-[#2b86d4] bg-[#e1e1e1] outline outline-[#9bc8ed] -outline-offset-2">
            保存(S)
          </div>
          <div className="ml-[9px] mr-[10px] flex h-[18px] w-[61px] items-center justify-center border border-[#bdbdbd] bg-[#e1e1e1]">
            取消
          </div>
        </div>
        <svg viewBox="0 0 7 7" className="-mr-[2px] mb-px ml-auto mt-auto h-[7px] w-[7px]">
          <path d="M5 0h2v2H5zM5 2.500h2v2H5zM5 5h2v2H5zM2.500 2.500h2v2h-2zM2.500 5h2v2h-2zM0 5h2v2H0z" fill="#bbb" />
        </svg>
      </div>
    </div>
  );
}

/* Highlight boxes and arrows for the step order */
function Annotations() {
  return (
    <svg viewBox="0 0 1080 579" className="pointer-events-none absolute left-0 top-0 h-[579px] w-[1080px]">
      <g fill="none" stroke="#ff2020" strokeWidth="1.300">
        <rect x="84" y="267" width="90" height="21.500" />
        <rect x="380" y="316" width="76" height="30" />
        <rect x="12.500" y="407.500" width="97" height="28" />
        <rect x="1.500" y="546.500" width="71.500" height="24.500" />
        <path d="M186 282.300L366 324M71.500 404L111 304M46.500 540L53.800 450" strokeWidth="1.200" />
      </g>
      <g fill="#ff0808">
        <path d="M371 325.500l-8.200 3 1.800-8.600z" />
        <path d="M112.800 298.500l1.300 8.200-7.800-3z" />
        <path d="M54.200 445l4.300 7.300-8.800-.6z" />
      </g>
    </svg>
  );
}

export default function App() {
  return (
    <div
      className={clsx("relative flex h-[579px] w-[1080px] flex-col overflow-hidden bg-[#f0f0f0]", UI_FONT)}
    >
      <TitleBar />
      <QuickAccess />
      <Ribbon />
      <div className="flex h-[446px] w-full shrink-0">
        <aside className="w-[14px] shrink-0 pt-[6px]">
          <div className="h-[50px] w-[13px] border border-[#ddd] bg-white" />
        </aside>
        <main className="flex w-[1049px] shrink-0 flex-col border-x border-[#ccc]">
          <Editor />
          <InterfaceEditor />
        </main>
        <aside className="flex flex-1 justify-end pt-[2px]">
          <div className="flex h-[54px] w-[13px] items-center justify-center border border-r-0 border-[#ddd] bg-white pr-[2px] text-[8.500px] leading-none text-[#444] [writing-mode:vertical-rl]">
            属性检查器
          </div>
        </aside>
      </div>
      <StatusBar />
      <FileDialog />
      <Annotations />
    </div>
  );
}
